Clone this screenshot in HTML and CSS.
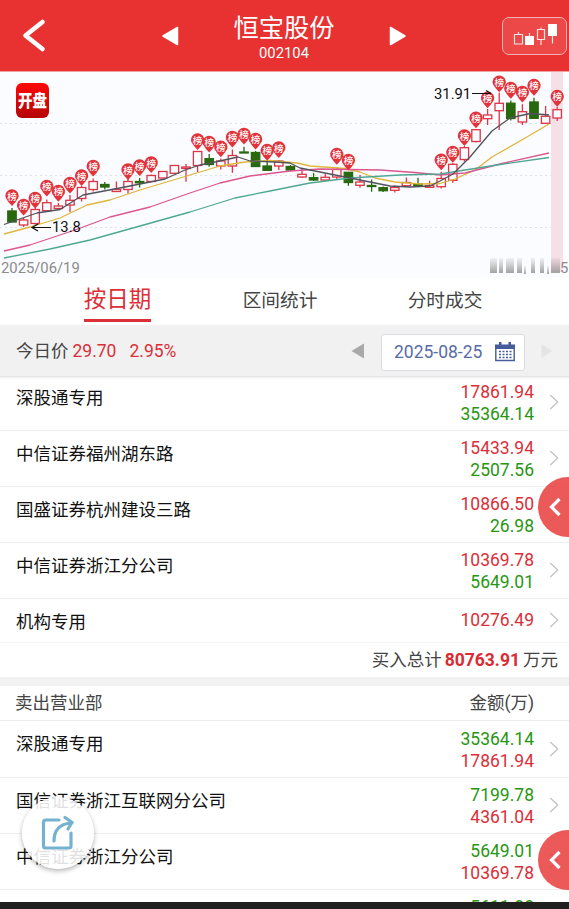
FILE: index.html
```
<!DOCTYPE html>
<html lang="zh-CN">
<head>
    <meta charset="UTF-8">
    <meta name="viewport" content="width=device-width, initial-scale=1.0">
    <title>恒宝股份 002104</title>
    <link rel="stylesheet" href="styles.css">
</head>
<body>
    <div id="app">
        <header class="header">
            <svg class="back" width="28" height="36" viewBox="0 0 28 36"><path d="M22.500 4 L5.500 17.500 L22.500 31" /></svg>
            <svg class="arrow" width="20" height="22" viewBox="0 0 20 22"><path d="M3 11 L17.5 2.5 V19.5 Z" /></svg>
            <div class="stock">
                <h1>恒宝股份</h1>
                <span>002104</span>
            </div>
            <svg class="arrow" width="20" height="22" viewBox="0 0 20 22"><path d="M17 11 L2.5 2.5 V19.5 Z" /></svg>
            <button class="kline-btn">
                <svg width="46" height="26" viewBox="0 0 46 26">
                    <path class="line" d="M2.500 11.500h8v9.500h-8z M6.500 9v2.500 M25.500 6.500h7v10h-7z M29 4.500v2 M29 16.500v5.500 M17.500 10v4 M40.500 13v7.500" />
                    <path class="solid" d="M13 13h9v9h-9z M36 1h9v12h-9z" />
                </svg>
            </button>
        </header>

        <section class="chart">
            <svg id="kline" width="569" height="206" viewBox="0 72 569 206">
                <defs>
                    <linearGradient id="openBg" x1="0" y1="0" x2="0" y2="1">
                        <stop offset="0" stop-color="#ff0808" />
                        <stop offset="1" stop-color="#b40404" />
                    </linearGradient>
                    <linearGradient id="fade" x1="0" y1="0" x2="0" y2="1">
                        <stop offset="0" stop-color="#909090" stop-opacity=".1" />
                        <stop offset="1" stop-color="#858585" stop-opacity=".75" />
                    </linearGradient>
                </defs>
                <rect class="today" x="551" y="72" width="12" height="200" />
                <path class="grid" d="M0 123.500H551 M0 175.500H551 M0 227.500H551" />
                <g id="candles"></g>
                <g id="averages"></g>
                <g id="badges"></g>
                <path class="pointer" d="M51 227.500H32 M38 224L32 227.500L38 231 M472 93.500H491 M486 90.500L491 93.500" />
                <text class="price" x="52" y="232">13.8</text>
                <text class="price" x="434" y="98.500">31.91</text>
                <rect x="16" y="83" width="33" height="35" rx="6" fill="url(#openBg)" />
                <text class="open" x="32.500" y="89" text-anchor="middle" transform="scale(1 1.2)">开盘</text>
                <text class="date" x="1" y="272.500">2025/06/19</text>
                <g fill="url(#fade)">
                    <rect x="490" y="258" width="7" height="15" />
                    <rect x="499" y="258" width="4" height="15" />
                    <rect x="506" y="258" width="8" height="15" />
                    <rect x="517" y="258" width="5" height="15" />
                    <rect x="524" y="266" width="2" height="8" />
                    <rect x="531" y="258" width="4" height="15" />
                    <rect x="540" y="258" width="4" height="15" />
                    <rect x="547" y="266" width="2" height="8" />
                    <rect x="551" y="258" width="9" height="15" />
                </g>
                <text class="date" x="560" y="272.500">5</text>
            </svg>
        </section>

        <nav class="tabs">
            <a class="active">按日期</a>
            <a>区间统计</a>
            <a>分时成交</a>
        </nav>

        <div class="datebar">
            <span>今日价</span>
            <span class="red now">29.70</span>
            <span class="red">2.95%</span>
            <svg class="prev" width="14" height="16" viewBox="0 0 14 16"><path d="M0.500 8 L13 .5 V15.500 Z" /></svg>
            <div class="picker">
                <span>2025-08-25</span>
                <svg width="20" height="20" viewBox="0 0 20 20">
                    <path d="M.8 7V18.500H19.200V7" fill="none" stroke="#465c9b" stroke-width="1.400" />
                    <path d="M0 2.500H20V7H0Z M4 0h2.500v4H4Z M13.500 0H16v4h-2.500Z" fill="#465c9b" />
                    <path d="M4 9.500H16.500 M4 12.500H16.500 M4 15.500H16.500" stroke="#465c9b" stroke-width="1.700" stroke-dasharray="2 1.500" />
                </svg>
            </div>
            <svg class="next" width="12" height="16" viewBox="0 0 12 16"><path d="M11 8 L.5 1 V15 Z" /></svg>
        </div>

        <main class="list">
            <div class="row first">
                <span class="name">深股通专用</span>
                <div class="nums"><span class="red">17861.94</span><span class="green">35364.14</span></div>
                <svg class="more" viewBox="0 0 12 20"><path d="M1.500 1.500L10.500 10L1.500 18.500" /></svg>
            </div>
            <div class="row">
                <span class="name">中信证券福州湖东路</span>
                <div class="nums"><span class="red">15433.94</span><span class="green">2507.56</span></div>
                <svg class="more" viewBox="0 0 12 20"><path d="M1.500 1.500L10.500 10L1.500 18.500" /></svg>
            </div>
            <div class="row">
                <span class="name">国盛证券杭州建设三路</span>
                <div class="nums"><span class="red">10866.50</span><span class="green">26.98</span></div>
                <svg class="more" viewBox="0 0 12 20"><path d="M1.500 1.500L10.500 10L1.500 18.500" /></svg>
            </div>
            <div class="row">
                <span class="name">中信证券浙江分公司</span>
                <div class="nums"><span class="red">10369.78</span><span class="green">5649.01</span></div>
                <svg class="more" viewBox="0 0 12 20"><path d="M1.500 1.500L10.500 10L1.500 18.500" /></svg>
            </div>
            <div class="row single">
                <span class="name">机构专用</span>
                <div class="nums"><span class="red">10276.49</span></div>
                <svg class="more" viewBox="0 0 12 20"><path d="M1.500 1.500L10.500 10L1.500 18.500" /></svg>
            </div>
            <div class="total">买入总计<strong>80763.91</strong>万元</div>

            <div class="list-head">
                <span>卖出营业部</span>
                <span>金额(万)</span>
            </div>
            <div class="row">
                <span class="name">深股通专用</span>
                <div class="nums"><span class="green">35364.14</span><span class="red">17861.94</span></div>
                <svg class="more" viewBox="0 0 12 20"><path d="M1.500 1.500L10.500 10L1.500 18.500" /></svg>
            </div>
            <div class="row">
                <span class="name">国信证券浙江互联网分公司</span>
                <div class="nums"><span class="green">7199.78</span><span class="red">4361.04</span></div>
                <svg class="more" viewBox="0 0 12 20"><path d="M1.500 1.500L10.500 10L1.500 18.500" /></svg>
            </div>
            <div class="row">
                <span class="name">中信证券浙江分公司</span>
                <div class="nums"><span class="green">5649.01</span><span class="red">10369.78</span></div>
                <svg class="more" viewBox="0 0 12 20"><path d="M1.500 1.500L10.500 10L1.500 18.500" /></svg>
            </div>
            <div class="row">
                <div class="nums"><span class="green">5611.88</span></div>
                <svg class="more" viewBox="0 0 12 20"><path d="M1.500 1.500L10.500 10L1.500 18.500" /></svg>
            </div>
        </main>
        <div class="navbar"></div>

        <!-- floating buttons -->
        <button class="side side-top"><svg width="14" height="22" viewBox="0 0 14 22"><path d="M11.500 3L3.500 11L11.500 19" /></svg></button>
        <button class="side side-bottom"><svg width="14" height="22" viewBox="0 0 14 22"><path d="M11.500 3L3.500 11L11.500 19" /></svg></button>
        <button class="share">
            <svg width="34" height="36" viewBox="0 0 34 36">
                <path d="M18 5H5Q2.500 5 2.500 7.500V31Q2.500 33 5 33H28Q30 33 30 31V18" />
                <path d="M13 26C13 15 19 9 30 8 M24 2.500L31 7.500L27 14" />
            </svg>
        </button>
    </div>

    <script src="chart.js"></script>
</body>
</html>
```

FILE: styles.css
```
html, body {
    height: 100%;
    margin: 0;
    padding: 0;
    overflow: hidden;
    font-family: Roboto, "Noto Sans CJK SC", sans-serif;
    font-size: 17.5px;
    color: #444;
}

button {
    padding: 0;
    border: none;
}

svg {
    display: block;
    flex-shrink: 0;
}

#app {
    position: relative;
    width: 569px;
    height: 909px;
    background: #fff;
    display: flex;
    flex-direction: column;
    overflow: hidden;
}

.red {
    color: #da2f38;
}

.green {
    color: #299613;
}

/* Header */
.header {
    box-sizing: border-box;
    flex: none;
    height: 72px;
    padding: 0 2px 0 20px;
    display: flex;
    align-items: center;
    background: #e83131;
    border-bottom: 1px solid #f3a0a4;
    color: #fff;
}

.back {
    fill: none;
    stroke: #fff;
    stroke-width: 4.6;
    stroke-linecap: round;
    stroke-linejoin: round;
}

.arrow {
    fill: #fff;
    stroke: #fff;
    stroke-width: 1.5;
    stroke-linejoin: round;
}

.back + .arrow {
    margin-left: 112px;
}

.stock {
    width: 208px;
    padding-top: 4px;
    text-align: center;
}

.stock h1 {
    margin: 0;
    font-size: 25.3px;
    font-weight: 400;
    line-height: 32px;
}

.stock span {
    display: block;
    font-size: 14.8px;
    line-height: 17px;
}

.kline-btn {
    box-sizing: border-box;
    width: 65px;
    height: 38px;
    margin-left: auto;
    display: flex;
    align-items: center;
    justify-content: center;
    background: #ec4848;
    border: 1px solid #f7b0b0;
    border-radius: 7px;
}

.kline-btn .line {
    fill: none;
    stroke: #fde3e3;
    stroke-width: 1.2;
}

.kline-btn .solid {
    fill: #fff;
}

/* Chart */
.chart {
    flex: none;
    height: 206px;
    background: #fbfcff;
}

.today {
    fill: #f7dfe7;
}

.grid {
    stroke: #dfe1e7;
    stroke-dasharray: 2 3;
}

.up {
    fill: #fbfcff;
    stroke: #dc3545;
    stroke-width: 1.3;
}

.down {
    fill: #28680f;
    stroke: #28680f;
    stroke-width: 1.3;
}

.avg {
    fill: none;
    stroke-width: 1.3;
    stroke-linejoin: round;
}

.pin {
    fill: #e2333b;
}

.pin-text {
    fill: #fff;
    font-size: 9.5px;
    font-weight: 500;
    text-anchor: middle;
}

.pointer {
    fill: none;
    stroke: #111;
    stroke-width: 1.2;
}

.price {
    font-size: 14.8px;
    fill: #111;
}

.date {
    font-size: 14.8px;
    fill: #8b8b8b;
}

.open {
    font-size: 14.5px;
    font-weight: 900;
    fill: #fff;
}

/* Tabs */
.tabs {
    flex: none;
    height: 47px;
    padding: 0 38px 0 34px;
    display: grid;
    grid-template-columns: 167px 158px 1fr;
    justify-items: center;
    align-items: start;
    font-size: 18.7px;
    line-height: 47px;
}

.tabs .active {
    font-size: 22.5px;
    line-height: 40px;
    padding-top: 1px;
    color: #dc3039;
    border-bottom: 3px solid #dc3039;
}

/* Date bar */
.datebar {
    box-sizing: border-box;
    flex: none;
    height: 52px;
    padding: 1px 16px 0;
    display: flex;
    align-items: center;
    background: #f1f1f1;
    border-bottom: 1px solid #e6e6e6;
    box-shadow: 0 1px 2px rgba(0, 0, 0, 0.08);
    z-index: 1;
}

.datebar > span {
    line-height: 22px;
}

.now {
    margin: 0 13px 0 4px;
}

.prev {
    margin-left: auto;
    fill: #a9a9a9;
}

.next {
    fill: #e4e4e4;
}

.picker {
    box-sizing: border-box;
    width: 144px;
    height: 37px;
    margin: 2px 16px 0;
    padding: 0 9px 0 12px;
    display: flex;
    align-items: center;
    justify-content: space-between;
    background: #fff;
    border: 1px solid #dcdde2;
    border-radius: 3px;
    color: #586ca6;
}

/* Broker list */
.list {
    flex: 1;
    min-height: 0;
    overflow: hidden;
}

.row {
    box-sizing: border-box;
    height: 56px;
    padding: 6px 10px 0 16px;
    display: flex;
    align-items: flex-start;
    border-bottom: 1px solid #eee;
}

.row.first {
    height: 54px;
    padding-top: 4px;
}

.name {
    line-height: 34px;
    color: #111;
}

.nums {
    margin-left: auto;
    margin-right: 15px;
    display: flex;
    flex-direction: column;
    align-items: flex-end;
    line-height: 22px;
}

.more {
    width: 10px;
    height: 20px;
    margin-top: 11px;
    overflow: visible;
    fill: none;
    stroke: #c4c4c4;
    stroke-width: 1.6;
}

.row.single {
    height: 44px;
    border-bottom-color: #f6f6f6;
}

.single .nums {
    line-height: 31px;
}

.single .more {
    margin-top: 5px;
}

.total {
    box-sizing: border-box;
    height: 34px;
    padding-right: 11px;
    line-height: 34px;
    text-align: right;
}

.total strong {
    margin: 0 3px;
    color: #d92c34;
}

.list-head {
    box-sizing: border-box;
    height: 44px;
    padding: 0 35px 0 15px;
    display: flex;
    justify-content: space-between;
    line-height: 34px;
    border-top: 9px solid #f2f2f2;
    border-bottom: 1px solid #eee;
}

.list-head + .row {
    height: 57px;
}

.list-head + .row .nums,
.list-head + .row .more {
    position: relative;
    top: 1px;
}

.navbar {
    flex: none;
    height: 7px;
    background: #202020;
}

/* Floating buttons */
.side {
    position: absolute;
    right: 0;
    width: 31px;
    height: 60px;
    padding-left: 10px;
    background: rgba(233, 66, 66, 0.88);
    border-radius: 30px 0 0 30px;
}

.side-top {
    top: 477px;
}

.side-bottom {
    top: 830px;
}

.side svg {
    fill: none;
    stroke: #fff;
    stroke-width: 3.2;
}

.share {
    position: absolute;
    left: 22px;
    top: 797px;
    width: 72px;
    height: 72px;
    display: flex;
    align-items: center;
    justify-content: center;
    background: rgba(255, 255, 255, 0.87);
    border-radius: 50%;
    box-shadow: 0 2px 5px rgba(0, 0, 0, 0.3);
}

.share svg {
    fill: none;
    stroke: #76b2cf;
    stroke-width: 3.2;
    stroke-linecap: round;
}
```

FILE: chart.js
```
// [direction, wick top, body top, body bottom, wick bottom, badge center]
const candles = [
    ['down', 208, 211, 222, 222, 196],
    ['up', 218, 220, 225, 227, 205.5],
    ['up', 207.5, 209.5, 223.5, 224.5, 198.5],
    ['up', 199.5, 202.7, 210.7, 211, 186.5],
    ['up', 203, 206, 208.5, 210, 191.7],
    ['up', 195, 200.3, 205, 212, 183.5],
    ['up', 186, 187.5, 198.5, 201.5, 176],
    ['up', 178.5, 181.5, 189.5, 191.5, 166.5],
    ['down', 182, 184.5, 187, 189.5],
    ['up', 181.5, 189.5, 191.5, 191.5],
    ['up', 179, 181.5, 189.5, 193.5, 170],
    ['down', 178, 181.5, 182.8, 187.5, 166],
    ['up', 174.5, 175.5, 181.5, 181.5, 163],
    ['up', 171.5, 171.5, 178, 178],
    ['up', 165.5, 165.5, 173.3, 173.3],
    ['up', 164, 167, 168.5, 181.7],
    ['up', 151.5, 151.5, 165.5, 172, 140],
    ['down', 154, 158.7, 164.5, 166.7, 142.5],
    ['up', 158.5, 161, 166, 169.5, 147.3],
    ['up', 149.5, 155.5, 166, 172.7, 137.5],
    ['down', 146.7, 152, 153, 153, 134.5],
    ['down', 151, 152.5, 166.5, 167, 139.5],
    ['down', 161.7, 166, 170.3, 171, 150.7],
    ['up', 160, 161, 166, 170, 148],
    ['down', 165, 166.5, 170, 171.5],
    ['up', 169, 174.3, 177, 178],
    ['down', 173, 177.7, 180, 181],
    ['up', 174, 177.3, 180, 181],
    ['up', 167.5, 169.5, 177, 180, 154.7],
    ['down', 172, 172.3, 182.5, 185.7, 160.5],
    ['up', 175, 182, 185.3, 187.7],
    ['down', 179.5, 185.5, 186.5, 191.7],
    ['down', 186.5, 187.7, 190.7, 192],
    ['up', 185.5, 187.5, 190.3, 192.5],
    ['up', 177.5, 182.5, 185.7, 185.7],
    ['down', 177.7, 184, 186, 186.5],
    ['up', 180.7, 185.5, 187.3, 187.3],
    ['up', 171.7, 178.5, 186.7, 188.5, 160.3],
    ['up', 163, 164.3, 180.3, 182.7, 152.7],
    ['up', 146, 147.7, 159.5, 161.5, 136],
    ['up', 129, 129.7, 141.5, 142.5, 118.3],
    ['up', 109, 115, 118.7, 125, 98.3],
    ['up', 92.7, 103.3, 110.7, 130, 82.3],
    ['down', 100.5, 103.2, 118.5, 120.5, 88.7],
    ['up', 104.3, 111.7, 122, 125, 92.5],
    ['down', 97.7, 102, 118.3, 119, 85.7],
    ['up', 106, 116.3, 123.3, 124],
    ['up', 107, 109.7, 118, 121, 96.7]
];

const averages = {
    '#dfb53a': '4,234 30,227 60,218 87,205 110,200 140,190 185,176.5 220,166 245,162 270,160.5 297,163 310,166 345,168.5 360,172 375,178 395,182 420,184 440,183.5 455,179 475,170 492,157 520,141 549,124',
    '#dc568f': '4,251 30,245 75,230 110,217 150,207 190,193 220,183 250,176 290,171 320,169 380,170 415,172.5 440,175 465,173 500,164 549,153',
    '#4ea792': '4,258 50,249 90,240 140,226 190,212 235,198 270,191 310,183 350,178 400,175 440,174 465,170 500,164.5 549,157.5',
    '#50535c': '4,224.5 37,213 60,209.5 83,195 125,187 145,183 165,179 185,170 200,165 215,162 238,157 250,161 275,162 290,163 300,168 315,171 340,176 355,179 380,184 390,186 410,187 430,186 440,181 453,174 470,157 492,131 510,118 530,113.5 549,115'
};

let bars = '';
let pins = '';
candles.forEach(([dir, high, top, bottom, low, pin], i) => {
    const x = 12 + i * 11.6;
    bars += `<g class="${dir}"><path d="M${x} ${high}V${top} M${x} ${bottom}V${low}" />
        <rect x="${x - 4.2}" y="${top}" width="8.4" height="${bottom - top}" /></g>`;
    if (pin) {
        pins += `<path class="pin" d="M${x - 6.2} ${pin + 2}A6.6 6.6 0 1 1 ${x + 6.2} ${pin + 2}Q${x + 4} ${pin + 6} ${x} ${pin + 10}Q${x - 4} ${pin + 6} ${x - 6.2} ${pin + 2}Z" />
            <text class="pin-text" x="${x}" y="${pin + 3.5}">榜</text>`;
    }
});

document.getElementById('candles').innerHTML = bars;
document.getElementById('badges').innerHTML = pins;
document.getElementById('averages').innerHTML = Object.entries(averages)
    .map(([color, points]) => `<polyline class="avg" stroke="${color}" points="${points}" />`)
    .join('');
```
